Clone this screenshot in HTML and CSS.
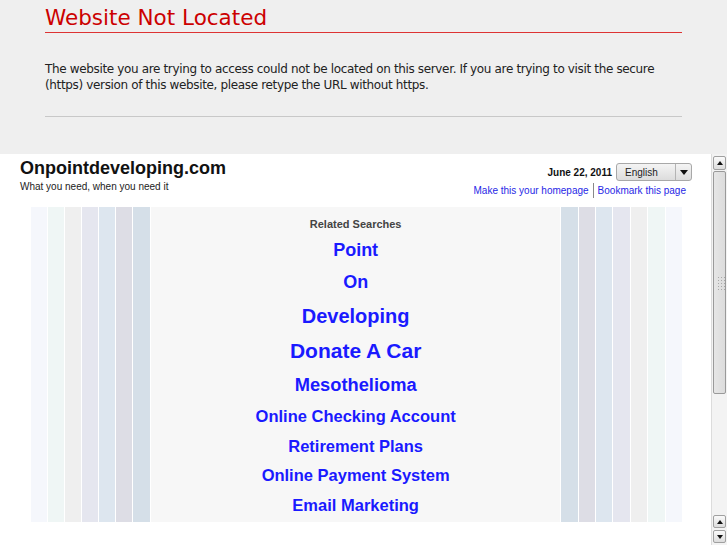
FILE: index.html
```html
<!DOCTYPE html>
<html lang="en">
<head>
  <meta charset="UTF-8" />
  <meta name="viewport" content="width=device-width, initial-scale=1.0"/>
  <title>Website Not Located</title>
  <link rel="stylesheet" href="styles.css">
</head>
<body>
  <div class="notice">
    <h1>Website Not Located</h1>
    <p>The website you are trying to access could not be located on this server. If you are trying to visit the secure (https) version of this website, please retype the URL without https.</p>
    <div class="rule"></div>
  </div>

  <div class="frame">
    <div class="page">
      <div class="header">
        <div class="brand">
          <div class="domain">Onpointdeveloping.com</div>
          <div class="tagline">What you need, when you need it</div>
        </div>
        <div class="tools">
          <div class="tools-row">
            <span class="date">June 22, 2011</span>
            <div class="select">
              <span class="select-label">English</span>
              <span class="select-arrow"></span>
            </div>
          </div>
          <div class="tools-links">
            <a href="#">Make this your homepage</a>
            <span class="sep"></span>
            <a href="#">Bookmark this page</a>
          </div>
        </div>
      </div>

      <div class="results">
        <div class="stripes">
          <span class="st1"></span><span class="st2"></span><span class="st3"></span><span class="st4"></span><span class="st5"></span><span class="st6"></span><span class="st7"></span>
        </div>
        <div class="searches">
          <div class="searches-title">Related Searches</div>
          <a class="term t-point" href="#">Point</a>
          <a class="term t-on" href="#">On</a>
          <a class="term t-dev" href="#">Developing</a>
          <a class="term t-car" href="#">Donate A Car</a>
          <a class="term t-meso" href="#">Mesothelioma</a>
          <a class="term t-sm" href="#">Online Checking Account</a>
          <a class="term t-sm" href="#">Retirement Plans</a>
          <a class="term t-sm" href="#">Online Payment System</a>
          <a class="term t-sm" href="#">Email Marketing</a>
        </div>
        <div class="stripes">
          <span class="st7"></span><span class="st6"></span><span class="st5"></span><span class="st4"></span><span class="st3"></span><span class="st2"></span><span class="st1"></span>
        </div>
      </div>
    </div>

    <div class="scrollbar">
      <div class="sb-btn sb-up"></div>
      <div class="sb-thumb"><span class="grip"></span></div>
      <div class="sb-track"></div>
      <div class="sb-btn sb-up"></div>
      <div class="sb-btn sb-down"></div>
    </div>
  </div>
</body>
</html>
```

FILE: styles.css
```css
* {
  box-sizing: border-box;
}

html, body {
  margin: 0;
  padding: 0;
  height: 100%;
  overflow: hidden;
}

body {
  background: #efefef;
  font-family: "DejaVu Sans", sans-serif;
}

/* error notice */

.notice {
  height: 154px;
  padding: 0 45px;
  background: #efefef;
}

.notice h1 {
  margin: 0;
  padding: 5px 0 2px;
  font-size: 21.5px;
  line-height: 25px;
  font-weight: normal;
  color: #c00;
  border-bottom: 1px solid #d33;
}

.notice p {
  margin: 28px 0 0;
  font-size: 12px;
  line-height: 16px;
  letter-spacing: -0.35px;
  color: #222;
}

.notice .rule {
  margin-top: 23px;
  height: 1px;
  background: #c8c8c8;
}

/* parked page frame */

.frame {
  display: flex;
  height: 391px;
  background: #fff;
  font-family: "Liberation Sans", Arial, sans-serif;
}

.page {
  flex: 1;
  overflow: hidden;
}

.header {
  display: flex;
  justify-content: space-between;
  height: 53px;
  padding: 0 19px 0 20px;
}

.domain {
  padding-top: 4px;
  font-size: 18px;
  line-height: 21px;
  font-weight: bold;
  color: #111;
}

.tagline {
  margin-top: 2px;
  font-size: 10px;
  line-height: 12px;
  color: #222;
}

.tools {
  padding-top: 9px;
  display: flex;
  flex-direction: column;
  align-items: flex-end;
}

.tools-row {
  display: flex;
  align-items: center;
  gap: 4px;
}

.date {
  font-size: 10px;
  font-weight: bold;
  color: #111;
}

.select {
  display: flex;
  width: 76px;
  height: 18px;
  border: 1px solid #a8a8a8;
  border-radius: 3px;
  background: linear-gradient(#f4f4f4, #dcdcdc);
}

.select-label {
  flex: 1;
  padding-left: 8px;
  font-size: 10px;
  line-height: 17px;
  color: #222;
}

.select-arrow {
  width: 16px;
  border-left: 1px solid #b4b4b4;
  position: relative;
}

.select-arrow::after {
  content: "";
  position: absolute;
  left: 4px;
  top: 6px;
  border-left: 4px solid transparent;
  border-right: 4px solid transparent;
  border-top: 5px solid #111;
}

.tools-links {
  margin: 2px 6px 0 0;
  display: flex;
  align-items: center;
  gap: 4px;
  font-size: 10px;
  line-height: 14px;
}

.tools-links a {
  color: #2727e6;
  text-decoration: none;
}

.sep {
  width: 1px;
  height: 15px;
  background: #888;
}

/* related searches box */

.results {
  display: flex;
  gap: 1px;
  height: 315px;
  margin: 0 29px 0 31px;
}

.stripes {
  display: flex;
  gap: 1px;
}

.stripes span {
  width: 16px;
}

.stripes:first-child span:last-child {
  width: 17px;
}

.stripes:last-child span {
  width: 16.4px;
}

.st1 { background: #f5f7fc; }
.st2 { background: #eff6f5; }
.st3 { background: #efefef; }
.st4 { background: #e5e6ef; }
.st5 { background: #dde6ef; }
.st6 { background: #dddde5; }
.st7 { background: #d5dfe8; }

.searches {
  flex: 1;
  background: #f7f7f7;
  padding-top: 10px;
  display: flex;
  flex-direction: column;
  align-items: center;
}

.searches-title {
  font-size: 11px;
  line-height: 14px;
  font-weight: bold;
  color: #444;
  margin-bottom: 3px;
}

.term {
  display: block;
  font-weight: bold;
  color: #1a1aff;
  text-decoration: none;
}

.t-point, .t-on {
  font-size: 18px;
  line-height: 32px;
}

.t-dev {
  font-size: 20px;
  line-height: 36px;
}

.t-car {
  font-size: 21px;
  line-height: 34px;
}

.t-meso {
  font-size: 18.3px;
  line-height: 34px;
}

.t-sm {
  font-size: 16.5px;
  line-height: 29.5px;
}

/* fake scrollbar */

.scrollbar {
  width: 16px;
  display: flex;
  flex-direction: column;
  background: #f3f3f3;
  border-left: 1px solid #dcdcdc;
  padding: 1px 1px 1px 1px;
}

.sb-btn {
  height: 13px;
  margin: 1px 0;
  border: 1px solid #a0a0a0;
  border-radius: 2px;
  background: linear-gradient(#fafafa, #dcdcdc);
  position: relative;
}

.scrollbar .sb-btn:first-child {
  height: 14px;
}

.sb-btn::after {
  content: "";
  position: absolute;
  left: 3px;
  top: 4px;
  border-left: 3px solid transparent;
  border-right: 3px solid transparent;
}

.sb-up::after {
  border-bottom: 4px solid #111;
}

.sb-down::after {
  border-top: 4px solid #111;
}

.sb-thumb {
  height: 223px;
  border: 1px solid #9a9a9a;
  border-radius: 2px;
  background: linear-gradient(90deg, #e6e6e6, #dcdcdc);
  position: relative;
}

.grip {
  position: absolute;
  left: 3px;
  top: 104px;
  width: 8px;
  height: 14px;
  background: radial-gradient(circle, #a8a8a8 0.8px, transparent 1px) 0 0 / 3px 3px;
}

.sb-track {
  flex: 1;
  margin-bottom: 2px;
}
```
